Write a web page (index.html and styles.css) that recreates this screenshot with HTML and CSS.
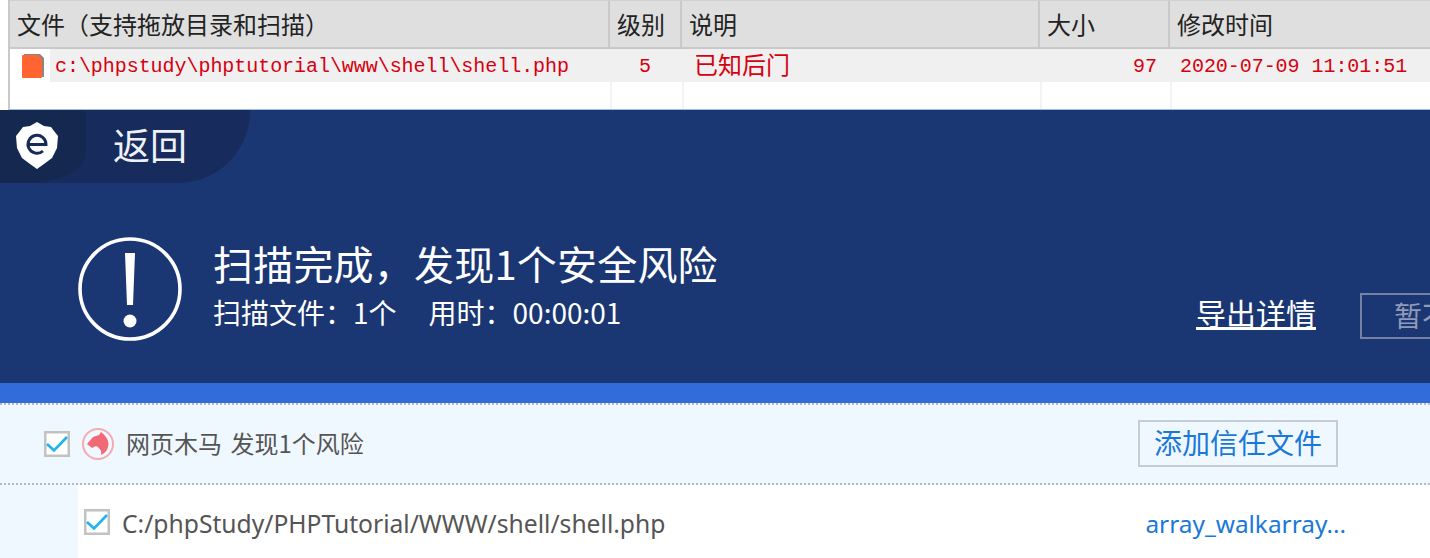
FILE: index.html
```html
<!DOCTYPE html>
<html lang="zh-CN">
<head>
<meta charset="utf-8">
<title>扫描结果</title>
<link rel="stylesheet" href="styles.css">
</head>
<body>
<section class="table">
  <div class="thead">
    <div class="th">文件（支持拖放目录和扫描）</div>
    <div class="th">级别</div>
    <div class="th">说明</div>
    <div class="th">大小</div>
    <div class="th">修改时间</div>
  </div>
  <div class="tr">
    <div class="td td-file">
      <span class="file-cell">
        <svg class="file-icon" width="24" height="26" viewBox="0 0 24 26"><path d="M3 1H19L23 5V24H19V4H3Z" fill="#8a8580"/><path d="M1 3Q1 2 2 2H17L21 6V24Q21 25 20 25H2Q1 25 1 24Z" fill="#ff6431"/></svg>
      </span>
      <span class="mono">c:\phpstudy\phptutorial\www\shell\shell.php</span>
    </div>
    <div class="td td-level mono">5</div>
    <div class="td td-desc">已知后门</div>
    <div class="td td-size mono">97</div>
    <div class="td td-time mono">2020-07-09 11:01:51</div>
  </div>
  <div class="tr tr-empty">
    <div class="td"></div><div class="td"></div><div class="td"></div><div class="td"></div><div class="td"></div>
  </div>
</section>

<section class="hero">
  <div class="back">
    <div class="back-logo">
      <svg width="42" height="47" viewBox="0 0 42 47"><path d="M21 0L28 4L35 5L38 9L42 14L41 26L36 36L28 42L21 47L14 42L6 36L1 26L0 14L4 9L7 5L14 4Z" fill="#fff"/><path d="M12 22.5H30A9 9 0 1 0 27 29" fill="none" stroke="#172b5a" stroke-width="3"/></svg>
    </div>
    <span class="back-label">返回</span>
  </div>
  <div class="summary">
    <svg class="alert" width="104" height="104" viewBox="0 0 104 104"><circle cx="52" cy="52" r="50" fill="none" stroke="#fff" stroke-width="3.6"/><path d="M47 16H57L55 68H49Z" fill="#fff"/><circle cx="52" cy="84" r="6.5" fill="#fff"/></svg>
    <div class="summary-text">
      <h1 class="headline">扫描完成，发现1个安全风险</h1>
      <p class="stats"><span>扫描文件：1个</span><span>用时：00:00:01</span></p>
    </div>
    <div class="actions">
      <a class="export">导出详情</a>
      <button class="later">暂不处理</button>
    </div>
  </div>
</section>
<div class="bar"></div>

<section class="group">
  <svg class="check" width="26" height="26" viewBox="0 0 26 26"><rect x="1.25" y="1.25" width="23.5" height="23.5" fill="#fff" stroke="#c2c2c2" stroke-width="2.5"/><path d="M3 13L10 19.5L23 6" fill="none" stroke="#1cb4ec" stroke-width="2.6"/></svg>
  <svg class="horse" width="32" height="32" viewBox="0 0 32 32"><circle cx="16" cy="16" r="15" fill="none" stroke="#f5aab2" stroke-width="2"/><path d="M19 4C24 8 28 13 26 19C25 23 23 25 19 27C20 23 18 20 14 18L10 20L5 16L11 9L17 7Z" fill="#f06a78"/></svg>
  <span class="group-title">网页木马 发现1个风险</span>
  <button class="trust">添加信任文件</button>
</section>
<section class="detail">
  <div class="detail-row">
    <svg class="check" width="26" height="26" viewBox="0 0 26 26"><rect x="1.25" y="1.25" width="23.5" height="23.5" fill="#fff" stroke="#c2c2c2" stroke-width="2.5"/><path d="M3 13L10 19.5L23 6" fill="none" stroke="#1cb4ec" stroke-width="2.6"/></svg>
    <span class="path">C:/phpStudy/PHPTutorial/WWW/shell/shell.php</span>
    <a class="func">array_walkarray...</a>
  </div>
</section>
</body>
</html>
```

FILE: styles.css
```css
* { box-sizing: border-box; }
html, body { margin: 0; padding: 0; }
body {
  width: 1430px;
  height: 558px;
  overflow: hidden;
  background: #fff;
  font-family: "Noto Sans CJK SC", "Liberation Sans", sans-serif;
}

.table {
  height: 110px;
  margin-left: 8px;
  border-left: 2px solid #c9c9c9;
  border-bottom: 1px solid #9dbde2;
}
.thead {
  display: grid;
  grid-template-columns: 600px 72px 358px 130px 1fr;
  height: 49px;
  background: #dfdfdf;
  border-top: 1px solid #cfcfcf;
  border-bottom: 2px solid #c9c9c9;
}
.th {
  padding-left: 7px;
  border-right: 2px solid #c9c9c9;
  font-size: 24px;
  line-height: 46px;
  color: #222;
}
.th:last-child { border-right: 0; }

.tr {
  display: grid;
  grid-template-columns: 602px 72px 358px 130px 1fr;
  height: 33px;
  background: #f0f0f0;
  color: #d6000f;
}
.tr-empty { height: 27px; background: #fff; }
.tr-empty .td { border-right: 2px solid #f3f3f3; }
.tr-empty .td:last-child { border-right: 0; }
.td { font-size: 24px; line-height: 33px; white-space: nowrap; }
.mono {
  font-family: "Liberation Mono", monospace;
  font-size: 20px;
  line-height: 35px;
  letter-spacing: -0.05px;
}
.td-file { display: flex; }
.file-cell {
  display: flex;
  align-items: center;
  justify-content: center;
  width: 40px;
  padding: 0 0 2px 6px;
  background: #fff;
}
.td-file .mono { padding-left: 5px; }
.td-level { padding-left: 27px; }
.td-desc { padding-left: 10px; line-height: 29px; }
.td-size { padding-right: 15px; text-align: right; }
.td-time { padding-left: 8px; }

.hero {
  height: 273px;
  overflow: hidden;
  background: #1a3673;
  color: #fff;
}
.back {
  display: flex;
  align-items: center;
  width: 250px;
  height: 73px;
  background: #172b5c;
  border-bottom-right-radius: 72px;
}
.back-logo {
  display: flex;
  align-items: center;
  width: 86px;
  height: 73px;
  padding: 0 0 2px 16px;
  background: #15284f;
  border-bottom-right-radius: 60px 30px;
}
.back-label {
  margin: 0 0 4px 27px;
  font-size: 37px;
  line-height: 69px;
  color: #eef1f6;
}

.summary {
  display: flex;
  align-items: flex-start;
  margin-top: 54px;
  padding-left: 78px;
}
.alert { flex: none; }
.summary-text { margin-left: 31px; }
.headline {
  margin: 2px 0 0;
  font-size: 40px;
  font-weight: 400;
  line-height: 48px;
  letter-spacing: 0.2px;
  white-space: nowrap;
}
.stats {
  display: flex;
  gap: 32px;
  margin: 6px 0 0;
  font-size: 28px;
  line-height: 38px;
  white-space: nowrap;
}
.actions {
  display: flex;
  align-items: center;
  gap: 44px;
  margin-left: auto;
  margin-right: -90px;
  margin-top: 55px;
}
.export {
  margin-bottom: 8px;
  font-size: 30px;
  line-height: 40px;
  text-decoration: underline;
  white-space: nowrap;
}
.later {
  width: 160px;
  height: 46px;
  padding: 0 0 4px 32px;
  background: none;
  border: 2px solid #7482a6;
  color: #8f9bb8;
  font: inherit;
  font-size: 28px;
  line-height: 40px;
  text-align: left;
  white-space: nowrap;
  overflow: hidden;
}

.bar { height: 20px; background: #326cdb; }

.group {
  display: flex;
  align-items: center;
  height: 82px;
  padding: 0 92px 0 44px;
  background: #f0f8ff;
  border-top: 2px dotted #b0bccd;
  border-bottom: 2px dotted #b0bccd;
}
.horse { margin-left: 12px; flex: none; }
.group-title {
  margin: 0 0 4px 12px;
  font-size: 24px;
  word-spacing: 3px;
  color: #555;
  white-space: nowrap;
}
.trust {
  width: 200px;
  height: 47px;
  margin: 0 0 2px auto;
  padding: 0 0 2px;
  background: #f0f8ff;
  border: 2px solid #c3ccd7;
  color: #1a78d8;
  font: inherit;
  font-size: 28px;
  line-height: 41px;
}

.detail {
  height: 73px;
  padding-left: 78px;
  background: #f0f8ff;
}
.detail-row {
  display: flex;
  align-items: center;
  height: 73px;
  padding: 0 84px 0 6px;
  background: #fff;
}
.check { flex: none; }
.path {
  margin: 4px 0 0 12px;
  font-family: "Noto Sans", sans-serif;
  font-size: 24.65px;
  color: #555;
  white-space: nowrap;
}
.func {
  margin: 4px 0 0 auto;
  font-family: "Noto Sans", sans-serif;
  font-size: 24.4px;
  color: #1a78d8;
  white-space: nowrap;
}
```
